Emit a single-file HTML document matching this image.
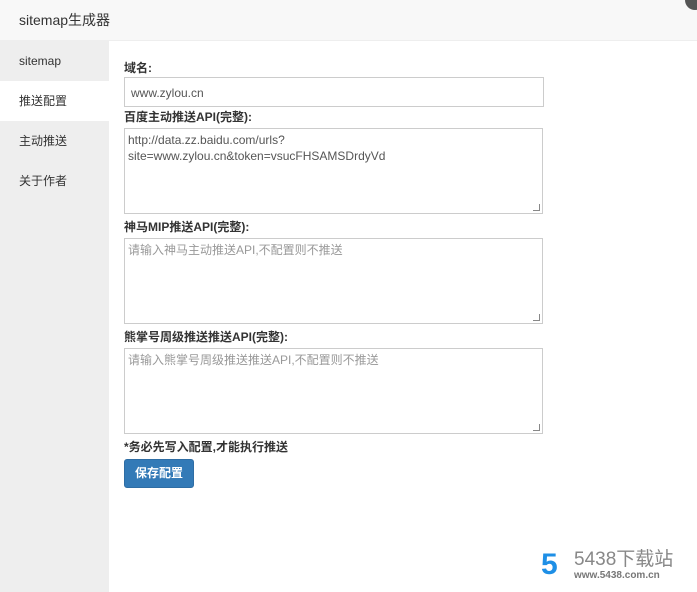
<!DOCTYPE html>
<html><head><meta charset="utf-8"><style>
*{box-sizing:border-box;margin:0;padding:0}
body{width:697px;height:592px;background:#fff;font-family:"Liberation Sans","Noto Sans CJK SC",sans-serif;font-size:12px;color:#333;position:relative;overflow:hidden}
.hd{position:absolute;left:0;top:0;width:697px;height:41px;background:#f8f8f8;border-bottom:1px solid #eee;font-size:14px;line-height:40px;padding-left:19px;color:#333}
.cl{position:absolute;right:-8px;top:-10px;width:20px;height:20px;border-radius:50%;background:#555}
.sb{position:absolute;left:0;top:41px;width:109px;height:551px;background:#eee}
.sb div{height:40px;line-height:40px;padding-left:19px;font-size:12px;color:#333}
.sb .on{background:#fff}
.lb{position:absolute;left:124px;font-weight:bold;font-size:12px;color:#333}
.in{position:absolute;left:124px;width:420px;border:1px solid #ccc;background:#fff;padding:3px 3px;font-size:12px;color:#555;line-height:16px}
.ph{color:#999}
.btn{position:absolute;left:124px;top:459px;width:70px;height:29px;background:#337ab7;border:1px solid #2e6da4;border-radius:3px;color:#fff;font-weight:bold;font-size:12px;line-height:27px;text-align:center}
.rs{position:absolute;right:2px;bottom:2px;width:7px;height:7px;border-right:1px solid #888;border-bottom:1px solid #888}
</style></head><body>
<div class="hd">sitemap生成器</div><div class="cl"></div>
<div class="sb"><div>sitemap</div><div class="on">推送配置</div><div>主动推送</div><div>关于作者</div></div>
<div class="lb" style="top:59px">域名:</div>
<div class="in" style="top:77px;height:30px;padding:7px 6px">www.zylou.cn</div>
<div class="lb" style="top:108px">百度主动推送API(完整):</div>
<div class="in" style="top:128px;height:86px;width:419px">http://data.zz.baidu.com/urls?<br>site=www.zylou.cn&amp;token=vsucFHSAMSDrdyVd<span class="rs"></span></div>
<div class="lb" style="top:218px">神马MIP推送API(完整):</div>
<div class="in ph" style="top:238px;height:86px;width:419px">请输入神马主动推送API,不配置则不推送<span class="rs"></span></div>
<div class="lb" style="top:328px">熊掌号周级推送推送API(完整):</div>
<div class="in ph" style="top:348px;height:86px;width:419px">请输入熊掌号周级推送推送API,不配置则不推送<span class="rs"></span></div>
<div class="lb" style="top:438px">*务必先写入配置,才能执行推送</div>
<div class="btn">保存配置</div>
<div style="position:absolute;left:541px;top:548px;font-size:30px;font-weight:bold;color:#1e8fe6;line-height:34px">5</div>
<div style="position:absolute;left:574px;top:549px;font-size:19px;color:#888;line-height:22px">5438下载站</div>
<div style="position:absolute;left:574px;top:570px;font-size:10px;color:#777;font-weight:bold;line-height:12px">www.5438.com.cn</div>
</body></html>
